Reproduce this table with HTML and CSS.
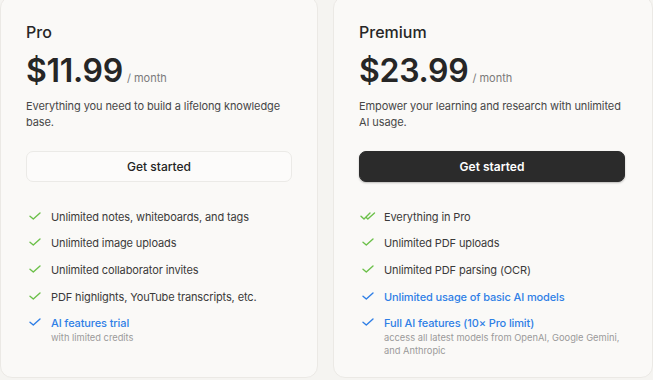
FILE: index.html
```html
<!DOCTYPE html>
<html lang="en">
<head>
  <meta charset="UTF-8" />
  <meta name="viewport" content="width=device-width, initial-scale=1.0" />
  <title>Pricing</title>
  <link rel="stylesheet" href="styles.css">
</head>
<body>
  <div class="plans">

    <div class="plan">
      <h2 class="plan-name">Pro</h2>
      <div class="price">
        <span class="amount">$11.99</span>
        <span class="period">/ month</span>
      </div>
      <p class="desc">Everything you need to build a lifelong knowledge base.</p>
      <button class="btn">Get started</button>

      <ul class="features">
        <li>
          <span class="icon"><svg width="12" height="8" viewBox="0 0 12 8"><path class="check green" d="M1 4.2 L4.3 7 L11 1"/></svg></span>
          <span class="text">Unlimited notes, whiteboards, and tags</span>
        </li>
        <li>
          <span class="icon"><svg width="12" height="8" viewBox="0 0 12 8"><path class="check green" d="M1 4.2 L4.3 7 L11 1"/></svg></span>
          <span class="text">Unlimited image uploads</span>
        </li>
        <li>
          <span class="icon"><svg width="12" height="8" viewBox="0 0 12 8"><path class="check green" d="M1 4.2 L4.3 7 L11 1"/></svg></span>
          <span class="text">Unlimited collaborator invites</span>
        </li>
        <li>
          <span class="icon"><svg width="12" height="8" viewBox="0 0 12 8"><path class="check green" d="M1 4.2 L4.3 7 L11 1"/></svg></span>
          <span class="text">PDF highlights, YouTube transcripts, etc.</span>
        </li>
        <li class="ai">
          <span class="icon"><svg width="12" height="8" viewBox="0 0 12 8"><path class="check blue" d="M1 4.2 L4.3 7 L11 1"/></svg></span>
          <div class="text">
            AI features trial
            <span class="sub">with limited credits</span>
          </div>
        </li>
      </ul>
    </div>

    <div class="plan">
      <h2 class="plan-name">Premium</h2>
      <div class="price">
        <span class="amount">$23.99</span>
        <span class="period">/ month</span>
      </div>
      <p class="desc">Empower your learning and research with unlimited AI usage.</p>
      <button class="btn dark">Get started</button>

      <ul class="features">
        <li>
          <span class="icon"><svg class="double" width="16" height="8" viewBox="0 0 16 8"><path class="check green" d="M1 4.2 L4 7 L10 1"/><path class="check green" d="M6.3 5.6 L7.8 7 L14.5 1"/></svg></span>
          <span class="text">Everything in Pro</span>
        </li>
        <li>
          <span class="icon"><svg width="12" height="8" viewBox="0 0 12 8"><path class="check green" d="M1 4.2 L4.3 7 L11 1"/></svg></span>
          <span class="text">Unlimited PDF uploads</span>
        </li>
        <li>
          <span class="icon"><svg width="12" height="8" viewBox="0 0 12 8"><path class="check green" d="M1 4.2 L4.3 7 L11 1"/></svg></span>
          <span class="text">Unlimited PDF parsing (OCR)</span>
        </li>
        <li class="ai">
          <span class="icon"><svg width="12" height="8" viewBox="0 0 12 8"><path class="check blue" d="M1 4.2 L4.3 7 L11 1"/></svg></span>
          <span class="text">Unlimited usage of basic AI models</span>
        </li>
        <li class="ai">
          <span class="icon"><svg width="12" height="8" viewBox="0 0 12 8"><path class="check blue" d="M1 4.2 L4.3 7 L11 1"/></svg></span>
          <div class="text">
            Full AI features (10× Pro limit)
            <span class="sub">access all latest models from OpenAI, Google Gemini, and Anthropic</span>
          </div>
        </li>
      </ul>
    </div>

  </div>
</body>
</html>
```

FILE: styles.css
```css
:root {
  --page: #f5f4f1;
  --card: #faf9f7;
  --border: #ebe9e5;
  --green: #6cc04a;
  --blue: #2f7fe6;
  --font: Inter, 'Noto Sans', sans-serif;
}

* {
  box-sizing: border-box;
  margin: 0;
  padding: 0;
}

body {
  font-family: var(--font);
  background: var(--page);
  color: #2b2b2b;
  overflow: hidden;
}

.plans {
  display: flex;
  gap: 15px;
  margin-top: -4px;
}

.plan {
  width: 318px;
  height: 382px;
  flex-shrink: 0;
  background: var(--card);
  border: 1px solid var(--border);
  border-radius: 12px;
  padding: 25px 25px 0;
}

.plan + .plan {
  width: 320px;
}

.plan-name {
  font-size: 16px;
  line-height: 20px;
  font-weight: 500;
  color: #262626;
}

.price {
  display: flex;
  align-items: baseline;
  gap: 4px;
  margin-top: 10px;
}

.amount {
  font-size: 32px;
  line-height: 38px;
  font-weight: 600;
  letter-spacing: -0.3px;
  color: #262626;
}

.period {
  font-size: 11px;
  color: #7a7a7a;
}

.desc {
  margin-top: 7.5px;
  font-size: 11px;
  line-height: 16px;
  letter-spacing: -0.1px;
  color: #474747;
}

.btn {
  display: block;
  width: 266px;
  height: 31px;
  margin-top: 21px;
  font-family: var(--font);
  font-size: 12px;
  font-weight: 500;
  color: #242424;
  background: #fcfbfa;
  border: 1px solid #ebeae7;
  border-radius: 7px;
  cursor: pointer;
}

.btn.dark {
  background: #2b2b2b;
  border-color: #2b2b2b;
  color: white;
  font-weight: 600;
  box-shadow: 0 1px 2px rgba(0,0,0,0.25);
}

.features {
  list-style: none;
  margin-top: 27px;
  display: flex;
  flex-direction: column;
  gap: 10.7px;
}

.features li {
  display: flex;
  align-items: flex-start;
  font-size: 11px;
  line-height: 16px;
  letter-spacing: -0.12px;
  color: #3a3a3a;
}

.icon {
  width: 25px;
  flex-shrink: 0;
  padding-left: 3px;
  padding-top: 3px;
}

.icon svg {
  display: block;
}

.icon .double {
  margin-left: -2px;
}

.check {
  fill: none;
  stroke-width: 1.4;
  stroke-linecap: round;
  stroke-linejoin: round;
}

.check.green { stroke: var(--green); }
.check.blue { stroke: var(--blue); }

.features li.ai {
  color: var(--blue);
  font-weight: 500;
}

.sub {
  display: block;
  margin-top: -0.5px;
  font-size: 9.3px;
  line-height: 13.5px;
  letter-spacing: 0;
  font-weight: 400;
  color: #9a9a9a;
}
```
